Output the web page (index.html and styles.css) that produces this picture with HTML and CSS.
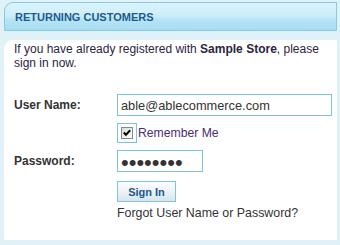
FILE: index.html
```html
<!DOCTYPE html>
<html>
<head>
<meta charset="utf-8">
<link rel="stylesheet" href="styles.css">
</head>
<body>
<div class="panel">
  <div class="panel-head">RETURNING CUSTOMERS</div>
  <div class="panel-body">
    <p class="intro"><span>If you have already registered with</span> <b>Sample Store</b><span>, please</span> <span>sign in now.</span></p>
    <form class="login">
      <label class="field-label" for="user">User Name:</label>
      <input id="user" class="txt txt-user" type="text" value="able@ablecommerce.com">
      <span></span>
      <label class="remember">
        <span class="cb-frame"><span class="cb"><svg viewBox="0 0 11 11" width="11" height="11"><path d="M2 5 L4.3 7.5 L9 2.5" fill="none" stroke="#000" stroke-width="2.2"/></svg></span></span>
        <span class="remember-text">Remember Me</span>
      </label>
      <label class="field-label" for="pass">Password:</label>
      <input id="pass" class="txt txt-pass" type="password" value="password">
      <span></span>
      <div class="actions">
        <button type="button" class="btn">Sign In</button>
        <div class="forgot">Forgot User Name or Password?</div>
      </div>
    </form>
  </div>
</div>
</body>
</html>
```
FILE: styles.css
```css
html, body {
  margin: 0;
  padding: 0;
  background: #e1f1f8;
  font-family: "Liberation Sans", Arial, sans-serif;
  color: #332d44;
}
.panel {
  padding: 2px 3px 0 4px;
}
.panel-head {
  height: 27px;
  border: 1px solid #86cae3;
  border-top-left-radius: 9px;
  background: linear-gradient(#dbf3fc 0%, #cdeefb 45%, #b6e4f5 62%, #a7dcf1 100%);
  display: flex;
  align-items: center;
  padding-left: 10px;
  font-size: 11px;
  font-weight: bold;
  color: #1d5b8e;
  margin-bottom: 9px;
}
.panel-body {
  background: #fff;
  border-top-left-radius: 9px;
  height: 200px;
  box-sizing: border-box;
  padding: 2px 10px 0 10px;
}
.intro {
  margin: 0;
  font-size: 12px;
  line-height: 14px;
  color: #2a2540;
}
.login {
  margin-top: 24px;
  display: grid;
  grid-template-columns: 103px auto;
  row-gap: 7px;
  align-items: center;
  justify-items: start;
}
.field-label {
  font-size: 12px;
  font-weight: bold;
  color: #333;
}
.txt {
  box-sizing: border-box;
  height: 22px;
  margin: 0;
  border: 1px solid #7cc3dd;
  padding: 0 3px;
  font-family: "Liberation Sans", Arial, sans-serif;
  color: #333;
  outline: none;
  background: #fff;
}
.txt-user {
  width: 215px;
  font-size: 12.8px;
}
.txt-pass {
  width: 86px;
  font-size: 22px;
  padding-top: 3px;
}
.remember {
  display: flex;
  align-items: center;
}
.cb-frame {
  box-sizing: border-box;
  width: 20px;
  height: 20px;
  border: 1px solid #7cc3dd;
  padding: 3px;
  display: flex;
}
.cb {
  box-sizing: border-box;
  width: 12px;
  height: 12px;
  border: 1px solid #7f8a94;
  background: linear-gradient(135deg, #dcdcd6, #fdfdfd);
  display: flex;
  align-items: center;
  justify-content: center;
}
.cb svg {
  display: block;
  width: 10px;
  height: 10px;
}
.remember-text {
  margin-left: 1px;
  font-size: 12.2px;
  color: #4a2d72;
}
.actions {
  grid-column: 2;
  margin-top: 2px;
  display: flex;
  flex-direction: column;
  align-items: flex-start;
}
.btn {
  box-sizing: border-box;
  width: 59px;
  height: 21px;
  margin: 0;
  padding: 0;
  border: 1px solid #7ec4dd;
  background: linear-gradient(#fbfdfe 0%, #eef4f7 45%, #d7e5ec 100%);
  font-family: "Liberation Sans", Arial, sans-serif;
  font-size: 11px;
  font-weight: bold;
  color: #1c5890;
}
.forgot {
  margin-top: 4px;
  font-size: 12.4px;
  line-height: 14px;
  color: #333;
}
```
